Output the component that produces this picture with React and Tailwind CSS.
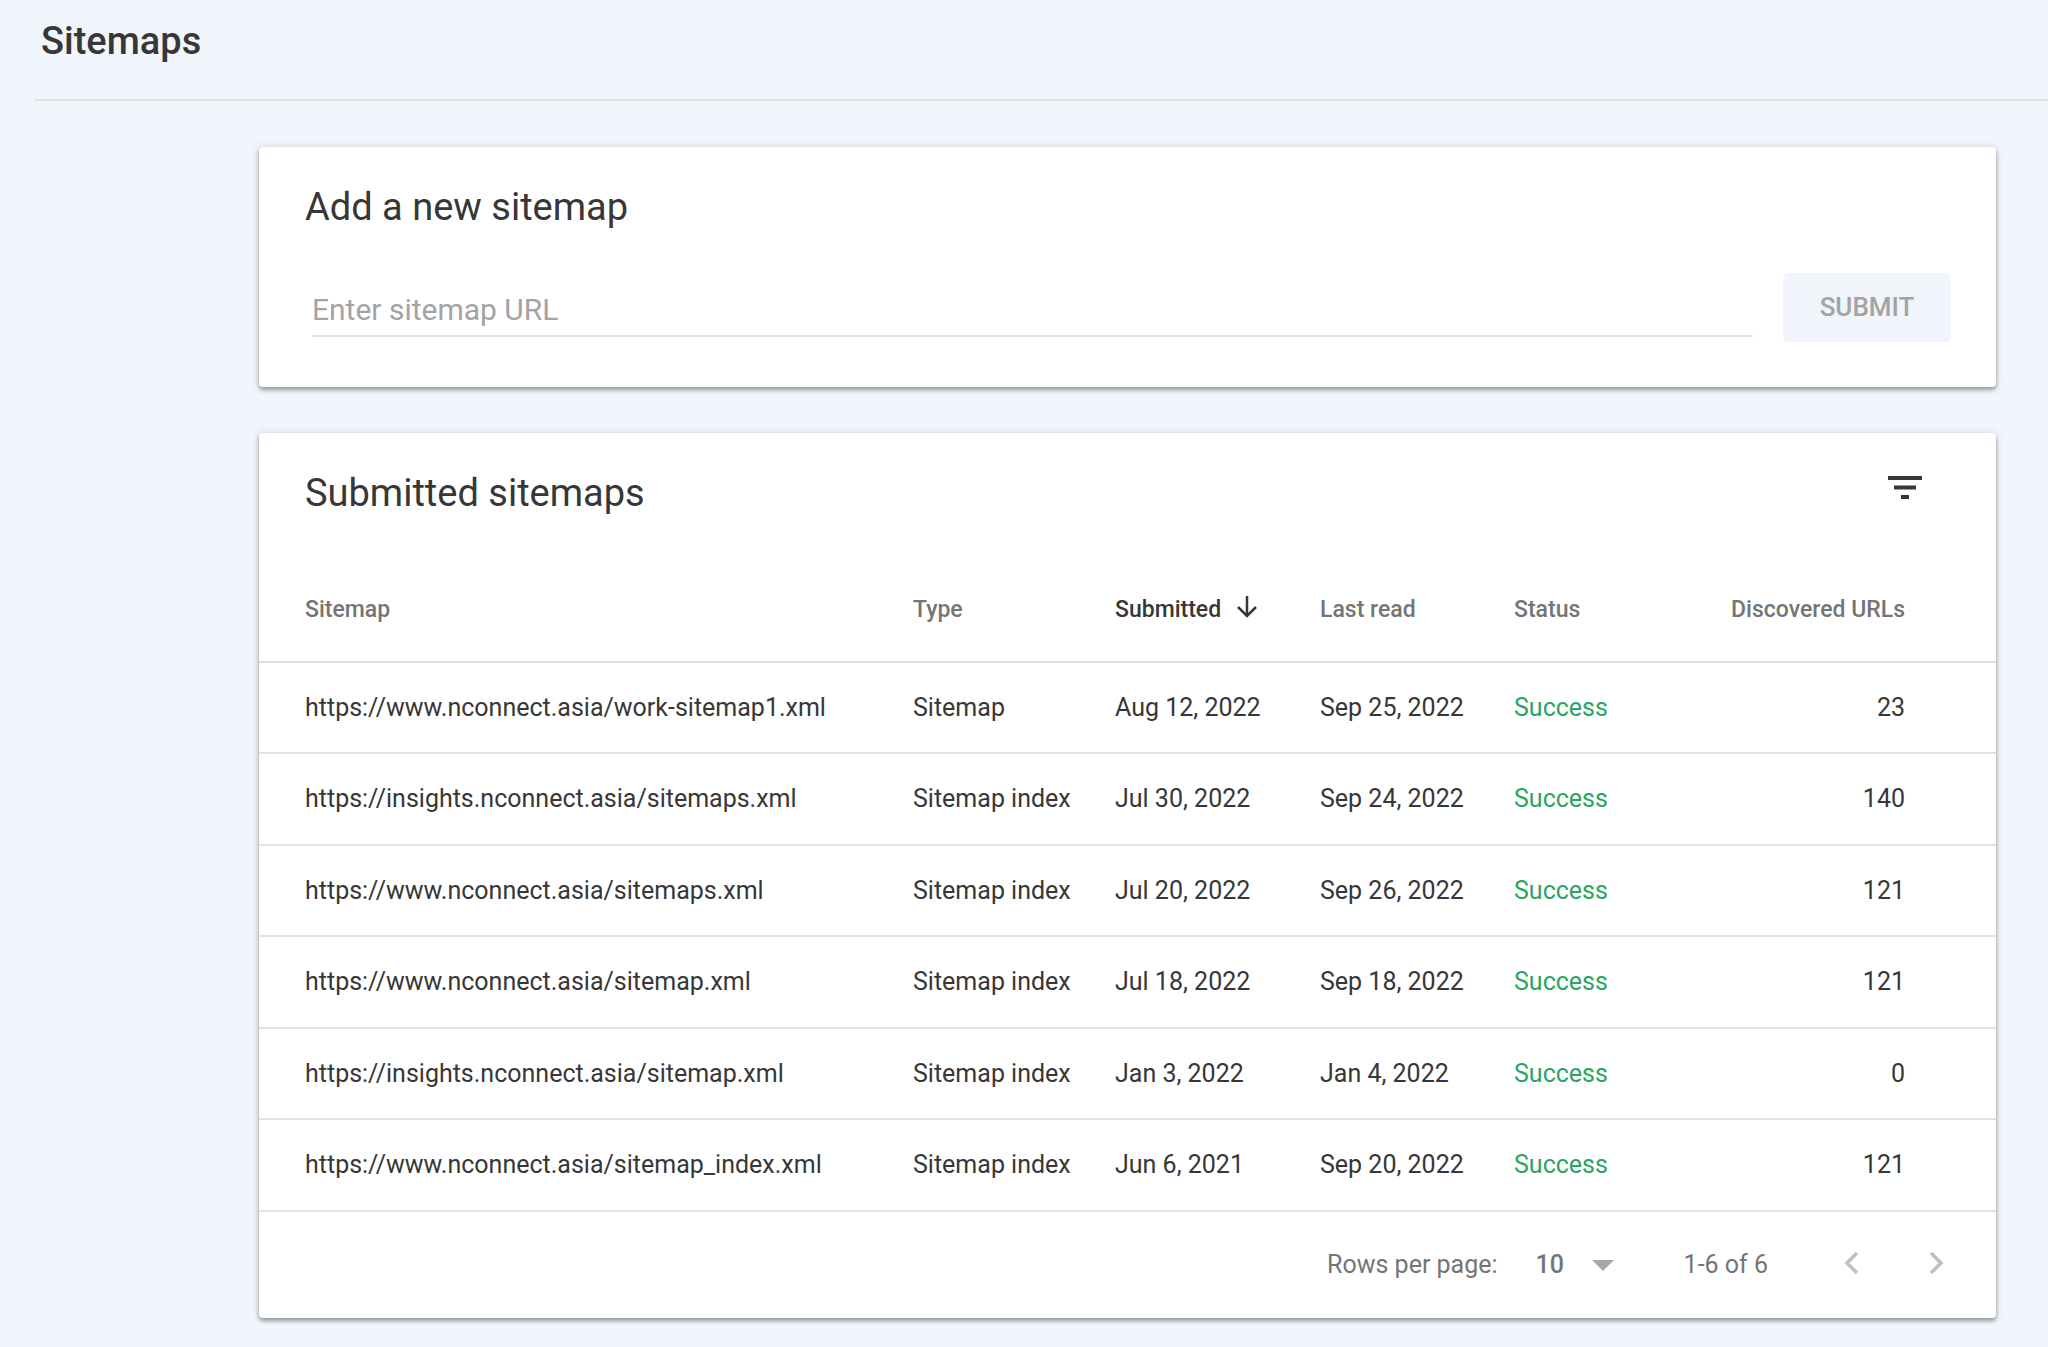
import { useState } from "react"

const sitemaps = [
  { url: "https://www.nconnect.asia/work-sitemap1.xml", type: "Sitemap", submitted: "Aug 12, 2022", lastRead: "Sep 25, 2022", status: "Success", urls: 23 },
  { url: "https://insights.nconnect.asia/sitemaps.xml", type: "Sitemap index", submitted: "Jul 30, 2022", lastRead: "Sep 24, 2022", status: "Success", urls: 140 },
  { url: "https://www.nconnect.asia/sitemaps.xml", type: "Sitemap index", submitted: "Jul 20, 2022", lastRead: "Sep 26, 2022", status: "Success", urls: 121 },
  { url: "https://www.nconnect.asia/sitemap.xml", type: "Sitemap index", submitted: "Jul 18, 2022", lastRead: "Sep 18, 2022", status: "Success", urls: 121 },
  { url: "https://insights.nconnect.asia/sitemap.xml", type: "Sitemap index", submitted: "Jan 3, 2022", lastRead: "Jan 4, 2022", status: "Success", urls: 0 },
  { url: "https://www.nconnect.asia/sitemap_index.xml", type: "Sitemap index", submitted: "Jun 6, 2021", lastRead: "Sep 20, 2022", status: "Success", urls: 121 },
]

function Card({ children }) {
  return (
    <section className="bg-white rounded-sm shadow-[0_0_8px_rgba(0,0,0,0.12),0_3px_4px_rgba(0,0,0,0.34)]">
      {children}
    </section>
  )
}

function AddSitemap() {
  const [url, setUrl] = useState("")

  return (
    <Card>
      <form className="pt-[35px] pb-[45px] pl-[46px] pr-[45px]" onSubmit={(e) => e.preventDefault()}>
        <h2 className="text-[38px] leading-[50px]">Add a new sitemap</h2>

        <div className="mt-[41px] flex items-start">
          <input
            type="text"
            aria-label="Sitemap URL"
            value={url}
            onChange={(e) => setUrl(e.target.value)}
            placeholder="Enter sitemap URL"
            className="ml-[7px] h-16 min-w-0 flex-1 border-b-2 border-[#dfe1e8] pt-[10px] text-[30px] outline-none placeholder:text-[#a3a3a3]"
          />
          <button
            type="submit"
            disabled={!url}
            className="ml-[30px] h-[69px] w-[168px] rounded-md bg-[#f1f4fb] text-[26px] font-medium text-[#a3a3a3]"
          >
            SUBMIT
          </button>
        </div>
      </form>
    </Card>
  )
}

function SitemapTable() {
  return (
    <table className="w-full table-fixed border-collapse text-left text-[25px]">
      <colgroup>
        <col />
        <col className="w-[202px]" />
        <col className="w-[205px]" />
        <col className="w-[194px]" />
        <col className="w-[202px]" />
        <col className="w-[280px]" />
      </colgroup>
      <thead>
        <tr className="h-[110px] border-b-2 border-[#e0e0e0] text-[23px] text-[#757575]">
          <th className="pt-2 pl-[46px] font-medium">Sitemap</th>
          <th className="pt-2 font-medium">Type</th>
          <th className="pt-2 font-medium text-[#373737]" aria-sort="descending">
            <button type="button" className="flex items-center gap-4">
              Submitted
              <svg viewBox="0 0 20 22" className="mb-2 h-[22px] w-5" fill="none" stroke="currentColor" strokeWidth="2.5" aria-hidden="true">
                <path d="M10 0v20M1 11l9 9 9-9" />
              </svg>
            </button>
          </th>
          <th className="pt-2 font-medium">Last read</th>
          <th className="pt-2 font-medium">Status</th>
          <th className="pt-2 pr-[91px] text-right font-medium whitespace-nowrap">Discovered URLs</th>
        </tr>
      </thead>
      <tbody>
        {sitemaps.map((s) => (
          <tr key={s.url} className="h-[91px] border-b-2 border-[#e0e2e6] even:h-[92px]">
            <td className="pl-[46px]">{s.url}</td>
            <td>{s.type}</td>
            <td>{s.submitted}</td>
            <td>{s.lastRead}</td>
            <td className="text-[#2aa562]">{s.status}</td>
            <td className="pr-[91px] text-right">{s.urls}</td>
          </tr>
        ))}
      </tbody>
    </table>
  )
}

function Pagination() {
  return (
    <div className="flex h-[106px] items-center justify-end pr-[52px] text-[25px] text-[#757575]">
      <label htmlFor="rows">Rows per page:</label>
      <div className="relative ml-[38px] flex items-center">
        <select id="rows" className="w-[78px] appearance-none font-medium outline-none" defaultValue="10">
          <option>10</option>
          <option>25</option>
          <option>50</option>
        </select>
        <svg viewBox="0 0 22 11" className="pointer-events-none absolute right-0 h-[11px] w-[22px]" fill="#a8a8a8" aria-hidden="true">
          <path d="M0 0h22L11 11z" />
        </svg>
      </div>
      <span className="ml-[70px]">1-6 of 6</span>
      <button type="button" aria-label="Previous page" disabled className="mb-1 ml-[76px]">
        <svg viewBox="0 0 15 24" className="h-6 w-[15px]" fill="none" stroke="#c0c0c0" strokeWidth="3.5" aria-hidden="true">
          <path d="M13 2L3 12l10 10" />
        </svg>
      </button>
      <button type="button" aria-label="Next page" disabled className="mb-1 ml-[70px]">
        <svg viewBox="0 0 15 24" className="h-6 w-[15px]" fill="none" stroke="#c0c0c0" strokeWidth="3.5" aria-hidden="true">
          <path d="M2 2l10 10L2 22" />
        </svg>
      </button>
    </div>
  )
}

export default function App() {
  return (
    <div className="min-h-screen bg-[#f1f5fc] font-[Roboto,sans-serif] text-[#373737]">

      {/* Page title */}
      <header className="ml-[35px] border-b-2 border-[#dfe0e2] pt-4 pb-[33px] pl-[6px]">
        <h1 className="text-[38px] leading-[50px] font-medium">Sitemaps</h1>
      </header>

      <main className="flex flex-col gap-[46px] pt-[46px] pr-[52px] pb-7 pl-[259px]">
        <AddSitemap />

        <Card>
          <div className="flex items-start justify-between pt-[35px] pl-[46px] pr-[74px]">
            <h2 className="text-[38px] leading-[50px]">Submitted sitemaps</h2>
            <button type="button" aria-label="Filter" className="mt-2">
              <svg viewBox="0 0 34 23" className="h-[23px] w-[34px]" fill="#373737" aria-hidden="true">
                <path d="M0 0h34v4H0zM6 9.5h22v4H6zM13 19h8v4h-8z" />
              </svg>
            </button>
          </div>
          <div className="mt-[34px]">
            <SitemapTable />
          </div>
          <Pagination />
        </Card>
      </main>
    </div>
  )
}
